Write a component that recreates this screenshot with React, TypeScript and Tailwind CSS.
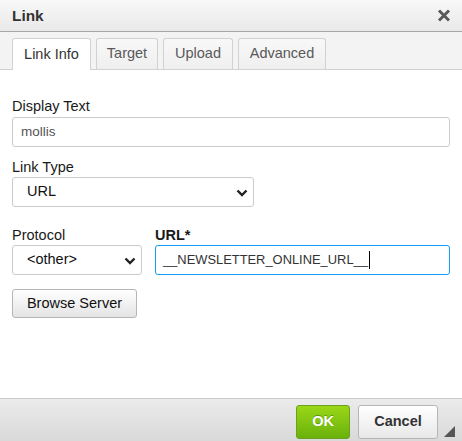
import React from 'react';

const tabs = [
  { label: 'Link Info', w: 'w-[79px]', active: true },
  { label: 'Target', w: 'w-[62px]', active: false },
  { label: 'Upload', w: 'w-[70px]', active: false },
  { label: 'Advanced', w: 'w-[88px]', active: false },
];

const Chevron = () => (
  <svg width="12" height="8" viewBox="0 0 12 8" className="absolute right-[5px] top-[11px] pointer-events-none">
    <path d="M1.5 1.5 L6 6 L10.5 1.5" fill="none" stroke="#222" strokeWidth="2.4" />
  </svg>
);

const FakeSelect: React.FC<{ value: string; w: string }> = ({ value, w }) => (
  <div className={`relative ${w} h-[30px] border border-[#c9cccf] rounded-[3px] bg-white flex items-center pl-[14px] text-[14.5px] text-[#111]`}>
    {value}
    <Chevron />
  </div>
);

export default function App() {
  return (
    <div className="w-[462px] h-[441px] flex flex-col bg-white overflow-hidden font-['Liberation_Sans',Arial,sans-serif]">
      {/* Title */}
      <div className="h-[32px] shrink-0 flex items-center justify-between pl-[12px] pr-[11px] border-b border-[#a6a6a6] bg-gradient-to-b from-[#f8f8f8] to-[#e9e9e9]">
        <span className="text-[15.4px] font-bold text-[#333]">Link</span>
        <svg width="14" height="13" viewBox="0 0 14 13">
          <path d="M2 1.5 L12 11.5 M12 1.5 L2 11.5" stroke="#5a5a5a" strokeWidth="3" />
        </svg>
      </div>

      {/* Tabs */}
      <div className="h-[38px] shrink-0 flex items-end gap-[5px] pl-[12px] border-b border-[#d1d1d1] bg-[#f3f3f3]">
        {tabs.map((t) => (
          <div
            key={t.label}
            className={`${t.w} h-[31px] flex items-center justify-center border border-b-0 rounded-t-[3px] text-[14.5px] ${
              t.active
                ? 'bg-white border-[#d1d1d1] text-[#333] h-[32px] -mb-px'
                : 'bg-gradient-to-b from-[#f8f8f8] to-[#efefef] border-[#d1d1d1] text-[#595959]'
            }`}
          >
            {t.label}
          </div>
        ))}
      </div>

      {/* Contents */}
      <div className="flex-1 px-[12px] pt-[28px] text-[14.5px] text-[#1a1a1a]">
        <div className="leading-[17px] mb-[2px]">Display Text</div>
        <div className="w-[438px] h-[30px] border border-[#c9cccf] rounded-[3px] flex items-center pl-[8px] text-[13.5px] text-[#555]">
          mollis
        </div>

        <div className="leading-[17px] mt-[12px] mb-[1px]">Link Type</div>
        <FakeSelect value="URL" w="w-[242px]" />

        <div className="flex gap-[13px] mt-[20px]">
          <div>
            <div className="leading-[17px] mb-[1px]">Protocol</div>
            <FakeSelect value="<other>" w="w-[130px]" />
          </div>
          <div>
            <div className="leading-[17px] mb-[1px] font-bold">URL*</div>
            <div className="w-[295px] h-[30px] border border-[#139ff7] rounded-[3px] flex items-center pl-[7px] text-[12.9px] text-[#333]">
              __NEWSLETTER_ONLINE_URL__
              <span className="inline-block w-px h-[18px] bg-black ml-px" />
            </div>
          </div>
        </div>

        <button className="mt-[14px] h-[29px] w-[125px] border border-[#b6b6b6] rounded-[3px] bg-gradient-to-b from-white to-[#e4e4e4] text-[14.5px] text-[#111]">
          Browse Server
        </button>
      </div>

      {/* Footer */}
      <div className="h-[43px] shrink-0 border-t border-[#c9c9c9] bg-gradient-to-b from-[#ebebeb] to-[#d9d9d9] flex items-start justify-end pt-[6px] pr-[24px] gap-[8px] relative">
        <button className="w-[54px] h-[34px] rounded-[3px] border border-[#6aa11f] bg-gradient-to-b from-[#9ad717] to-[#69b10b] text-white font-bold text-[14.5px] [text-shadow:0_-1px_0_#5a9a0a]">
          OK
        </button>
        <button className="w-[80px] h-[34px] rounded-[3px] border border-[#b6b6b6] bg-gradient-to-b from-white to-[#e8e8e8] text-[#333] font-bold text-[14.5px]">
          Cancel
        </button>
        <svg width="12" height="12" viewBox="0 0 12 12" className="absolute right-[6px] bottom-[3px]">
          <path d="M11 0 L11 11 L0 11 Z" fill="#555" />
        </svg>
      </div>
    </div>
  );
}
